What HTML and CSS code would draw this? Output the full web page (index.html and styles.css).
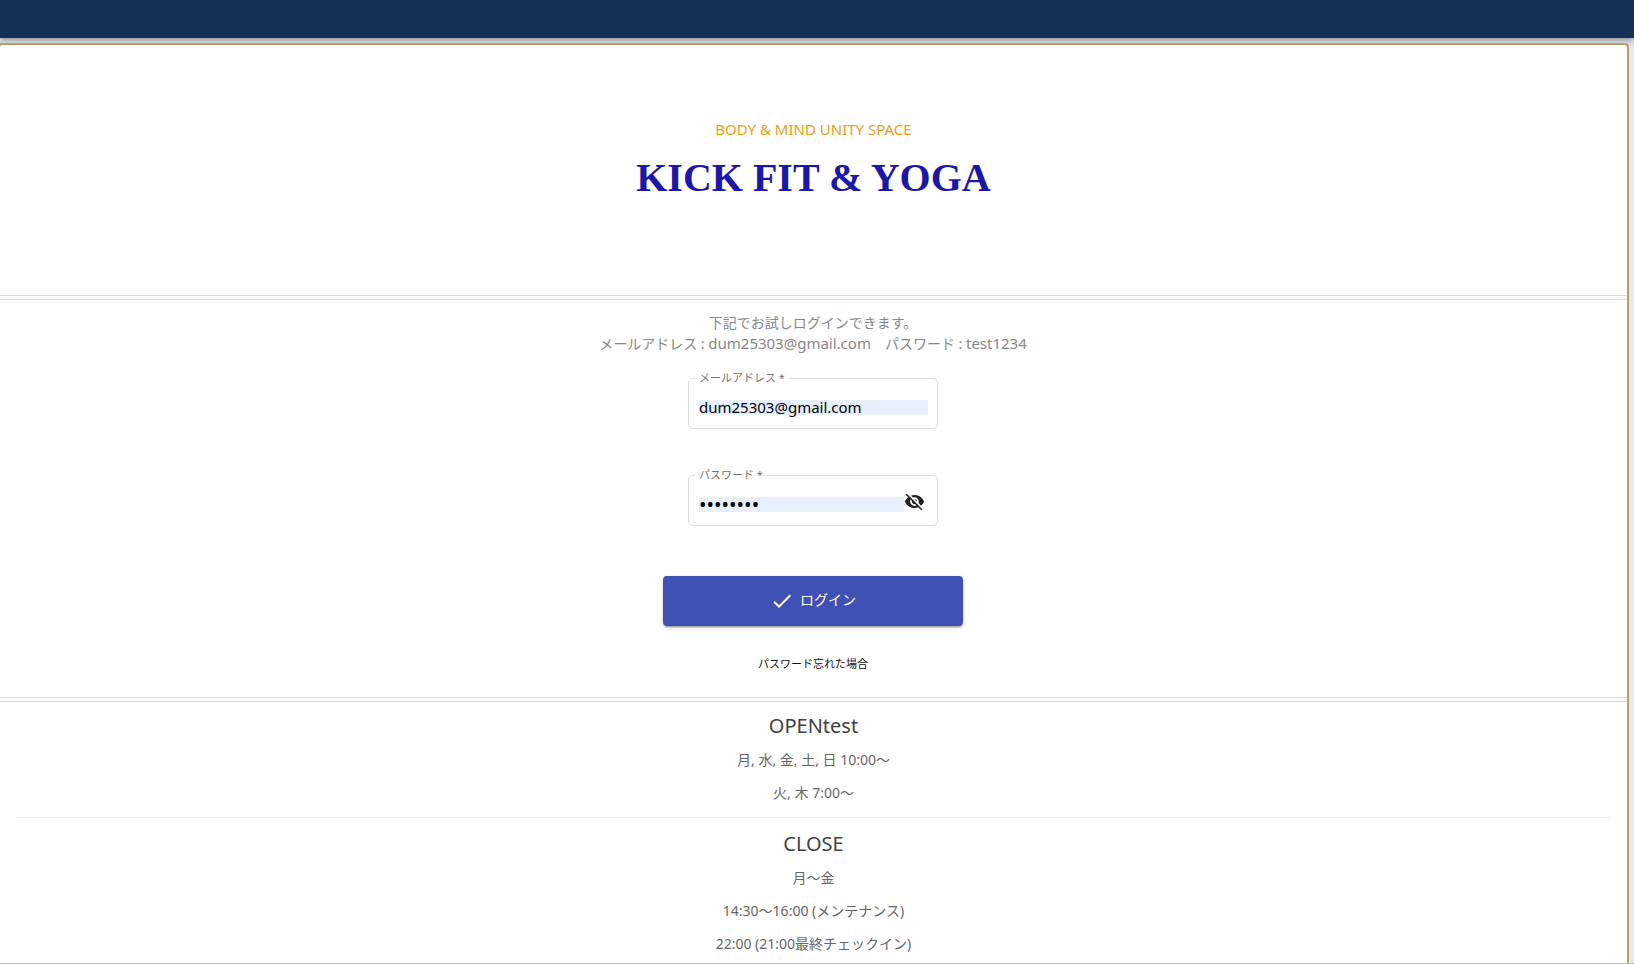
FILE: index.html
```html
<!DOCTYPE html>
<html lang="ja">
<head>
<meta charset="utf-8">
<meta name="viewport" content="width=device-width, initial-scale=1">
<title>KICK FIT &amp; YOGA</title>
<link rel="stylesheet" href="styles.css">
</head>
<body>
<header class="app-bar"></header>
<main class="card">
  <section class="hero">
    <p class="tagline">BODY &amp; MIND UNITY SPACE</p>
    <h1 class="brand">KICK FIT &amp; YOGA</h1>
  </section>
  <section class="login">
    <p class="hint">下記でお試しログインできます。<br>メールアドレス : <span class="latin">dum25303@gmail.com</span>　パスワード : <span class="latin">test1234</span></p>
    <form class="form">
      <fieldset class="field">
        <legend class="legend"><label for="email">メールアドレス *</label></legend>
        <input class="input" id="email" type="email" value="dum25303@gmail.com" required>
      </fieldset>
      <fieldset class="field">
        <legend class="legend"><label for="password">パスワード *</label></legend>
        <input class="input input-password" id="password" type="password" value="test1234" required>
        <button class="toggle" type="button" aria-label="パスワードを表示">
          <svg class="eye" viewBox="0 0 24 24" aria-hidden="true"><path fill="currentColor" d="M12 7c2.76 0 5 2.24 5 5 0 .65-.13 1.26-.36 1.83l2.92 2.92c1.51-1.26 2.7-2.89 3.43-4.75-1.73-4.39-6-7.5-11-7.5-1.4 0-2.74.25-3.98.7l2.16 2.16C10.74 7.13 11.35 7 12 7zM2 4.27l2.28 2.28.46.46C3.08 8.3 1.78 10.02 1 12c1.73 4.39 6 7.5 11 7.5 1.55 0 3.03-.3 4.38-.84l.42.42L19.73 22 21 20.73 3.27 3 2 4.27zM7.53 9.8l1.55 1.55c-.05.21-.08.43-.08.65 0 1.66 1.34 3 3 3 .22 0 .44-.03.65-.08l1.55 1.55c-.67.33-1.41.53-2.2.53-2.76 0-5-2.24-5-5 0-.79.2-1.53.53-2.2zm4.31-.78l3.15 3.15.02-.16c0-1.66-1.34-3-3-3l-.17.01z"/></svg>
        </button>
      </fieldset>
      <button class="submit" type="submit">
        <svg class="check" viewBox="0 0 24 24" aria-hidden="true"><path fill="currentColor" d="M9 16.2L4.8 12l-1.4 1.4L9 19 21 7l-1.4-1.4L9 16.2z"/></svg>
        <span class="submit-text">ログイン</span>
      </button>
    </form>
    <a class="forgot" href="#">パスワード忘れた場合</a>
  </section>
  <section class="hours">
    <div class="hours-group">
      <h2 class="hours-title">OPENtest</h2>
      <p class="hours-line">月, 水, 金, 土, 日 10:00～</p>
      <p class="hours-line">火, 木 7:00～</p>
    </div>
    <div class="hours-group">
      <h2 class="hours-title">CLOSE</h2>
      <p class="hours-line">月～金</p>
      <p class="hours-line">14:30～16:00 (メンテナンス)</p>
      <p class="hours-line">22:00 (21:00最終チェックイン)</p>
    </div>
  </section>
</main>
<footer class="bottom-edge"></footer>
</body>
</html>
```
FILE: styles.css
```css
* { box-sizing: border-box; }
body {
  margin: 0;
  min-height: 100vh;
  display: flex;
  flex-direction: column;
  background: #e4e7ef;
  font-family: "Noto Sans", "Noto Sans CJK JP", sans-serif;
  overflow-x: hidden;
}
h1, h2, p { margin: 0; font-weight: 400; }
.app-bar {
  height: 38px;
  background: #153057;
  box-shadow: 0 2px 4px -1px rgba(0,0,0,.2), 0 4px 5px rgba(0,0,0,.14), 0 1px 10px rgba(0,0,0,.12);
}
.card {
  flex: 1;
  position: relative;
  margin: 5px 5px 0 -2px;
  background: #fff;
  border: 2px solid #b99e62;
  border-bottom: 0;
  border-radius: 4px 4px 0 0;
  text-align: center;
}
.hero {
  height: 251px;
  padding-top: 73px;
  border-bottom: 1px solid #ddd;
}
.tagline { color: #e6a117; font-size: 15px; line-height: 22px; }
.brand {
  margin-top: 14px;
  color: #1c18a5;
  font: bold 40px/48px "Liberation Serif", serif;
}
.login {
  display: flex;
  flex-direction: column;
  align-items: center;
  margin-top: 3px;
  padding: 13px 1px 23px 0;
  border-top: 1px solid #ddd;
  border-bottom: 1px solid #ddd;
}
.hint { color: #888; font-size: 14px; line-height: 20px; }
.latin { font-size: 15px; }
.form {
  display: flex;
  flex-direction: column;
  align-items: center;
}
.field {
  display: flex;
  align-items: flex-start;
  width: 250px;
  min-width: 0;
  height: 59px;
  margin: 16px 0 22px;
  padding: 6px 9px 0 10px;
  border: 1px solid #ddd;
  border-radius: 5px;
  text-align: left;
}
.legend {
  margin-left: -4px;
  padding: 0 4px;
  color: #757575;
  font-size: 11px;
  line-height: 16px;
}
.input {
  flex: 1;
  min-width: 0;
  height: 21px;
  margin-top: 5px;
  padding: 0;
  border: 0;
  background: linear-gradient(#e8f0fe, #e8f0fe) center / 100% 15px no-repeat;
  color: #000;
  font: 15px/21px "Noto Sans", sans-serif;
}
.input-password { font-size: 20px; }
.toggle {
  width: 24px;
  height: 23px;
  padding: 2px 0 0;
  border: 0;
  background: none;
  color: #212121;
  text-align: left;
}
.eye { display: block; width: 21px; height: 21px; }
.submit {
  display: flex;
  align-items: center;
  justify-content: center;
  gap: 6px;
  width: 300px;
  height: 50px;
  margin: 28px 0;
  border: 0;
  border-radius: 4px;
  background: #3f51b5;
  color: #fff;
  font: 14px/20px "Noto Sans CJK JP", sans-serif;
  box-shadow: 0 3px 1px -2px rgba(0,0,0,.2), 0 2px 2px rgba(0,0,0,.14), 0 1px 5px rgba(0,0,0,.12);
}
.submit-text { padding-bottom: 4px; }
.check { width: 24px; height: 24px; }
.forgot { color: #111; font-size: 11px; line-height: 20px; text-decoration: none; }
.hours { margin-top: 3px; border-top: 1px solid #ddd; }
.hours-group { margin: 0 16px; padding: 7px 0 9px; }
.hours-group + .hours-group { border-top: 1px solid #ebebeb; padding: 9px 0 0; }
.hours-title { color: #424242; font-size: 20px; line-height: 33px; }
.hours-line { margin-top: 3px; padding: 5px 0; color: #666; font-size: 14px; line-height: 20px; }
.bottom-edge { height: 1px; background: #bcbccc; }
```
